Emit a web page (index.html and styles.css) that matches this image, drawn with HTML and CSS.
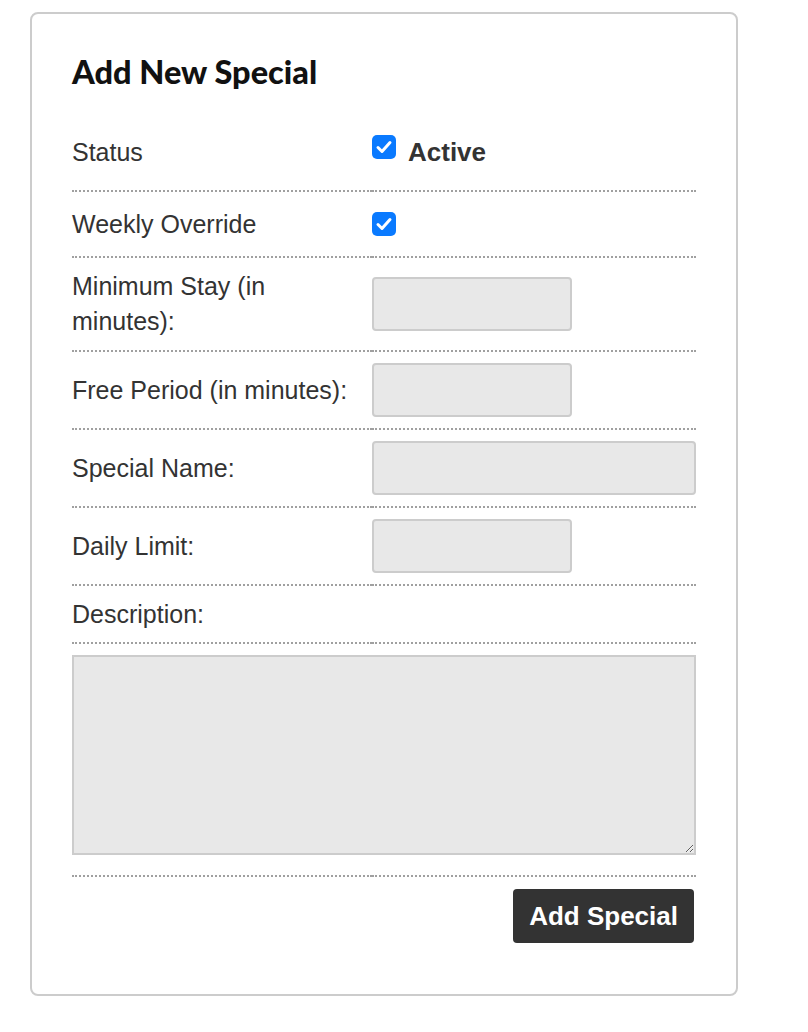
FILE: index.html
```html
<!DOCTYPE html>
<html>
<head>
<meta charset="utf-8">
<link rel="stylesheet" href="styles.css">
</head>
<body>
<div class="page">
  <div class="card">
    <h2 class="title">Add New Special</h2>
    <table class="form">
      <tr class="first">
        <td class="label">Status</td>
        <td class="field">
          <div class="check-wrap">
            <span class="check"><svg width="24" height="24" viewBox="0 0 24 24"><rect width="24" height="24" rx="5" fill="#0a7aff"/><path d="M6 12.5 L10 16.5 L18 7.5" fill="none" stroke="#fff" stroke-width="3" stroke-linecap="round" stroke-linejoin="round"/></svg></span>
            <span class="check-text">Active</span>
          </div>
        </td>
      </tr>
      <tr>
        <td class="label">Weekly Override</td>
        <td class="field">
          <div class="check-wrap">
            <span class="check"><svg width="24" height="24" viewBox="0 0 24 24"><rect width="24" height="24" rx="5" fill="#0a7aff"/><path d="M6 12.5 L10 16.5 L18 7.5" fill="none" stroke="#fff" stroke-width="3" stroke-linecap="round" stroke-linejoin="round"/></svg></span>
          </div>
        </td>
      </tr>
      <tr>
        <td class="label">Minimum Stay (in<br>minutes):</td>
        <td class="field"><input class="input short" type="text"></td>
      </tr>
      <tr>
        <td class="label">Free Period (in minutes):</td>
        <td class="field"><input class="input short" type="text"></td>
      </tr>
      <tr>
        <td class="label">Special Name:</td>
        <td class="field"><input class="input full" type="text"></td>
      </tr>
      <tr>
        <td class="label">Daily Limit:</td>
        <td class="field"><input class="input short" type="text"></td>
      </tr>
      <tr class="desc">
        <td class="label" colspan="2">Description:</td>
      </tr>
      <tr>
        <td class="area-cell" colspan="2"><textarea class="area"></textarea></td>
      </tr>
      <tr class="last">
        <td class="actions" colspan="2"><button class="btn" type="button">Add Special</button></td>
      </tr>
    </table>
  </div>
</div>
</body>
</html>
```

FILE: styles.css
```css
html, body {
  margin: 0;
  padding: 0;
  background: #fff;
}
.page {
  padding: 12px 0 0 30px;
}
.card {
  width: 624px;
  border: 2px solid #cccccc;
  border-radius: 8px;
  padding: 40px 40px 40px 40px;
  font-family: "Liberation Sans", Arial, sans-serif;
  color: #333;
}
.title {
  font-family: Lato, "Open Sans", sans-serif;
  font-weight: 900;
  font-size: 32.5px;
  line-height: 36px;
  margin: 0 0 30px 0;
  color: #111;
}
.form {
  width: 624px;
  border-collapse: collapse;
  table-layout: fixed;
}
.form td {
  border-bottom: 2px dotted #a0a0a0;
  padding: 11px 0;
  vertical-align: middle;
  font-size: 25px;
  line-height: 35px;
}
.form tr.first td {
  padding-bottom: 17px;
}
.form tr.desc td {
  padding-bottom: 10px;
}
.form tr.last td {
  border-bottom: none;
}
.form td.label {
  width: 300px;
}
.check-wrap {
  display: flex;
  align-items: center;
  height: 42px;
  gap: 12px;
}
.check {
  display: block;
  width: 24px;
  height: 24px;
  margin-top: 0;
}
.first .check {
  margin-top: -10px;
}
.check svg {
  display: block;
}
.check-text {
  font-weight: bold;
  font-size: 26px;
  color: #333;
}
.input {
  display: block;
  box-sizing: border-box;
  height: 54px;
  background: #e8e8e8;
  border: 2px solid #cccccc;
  border-radius: 4px;
  margin: 0;
  padding: 0 8px;
  font-size: 20px;
}
.input.short {
  width: 200px;
}
.input.full {
  width: 324px;
}
.area-cell {
  padding: 11px 0 20px 0 !important;
}
.area {
  display: block;
  box-sizing: border-box;
  width: 624px;
  height: 200px;
  background: #e8e8e8;
  border: 2px solid #cccccc;
  border-radius: 0;
  margin: 0;
  resize: vertical;
}
.actions {
  text-align: right;
  padding: 12px 2px 11px 0 !important;
}
.btn {
  display: inline-block;
  background: #333333;
  color: #fff;
  border: none;
  border-radius: 4px;
  height: 54px;
  padding: 0 16px;
  font-family: "Liberation Sans", Arial, sans-serif;
  font-weight: bold;
  font-size: 26px;
  vertical-align: top;
}
```
